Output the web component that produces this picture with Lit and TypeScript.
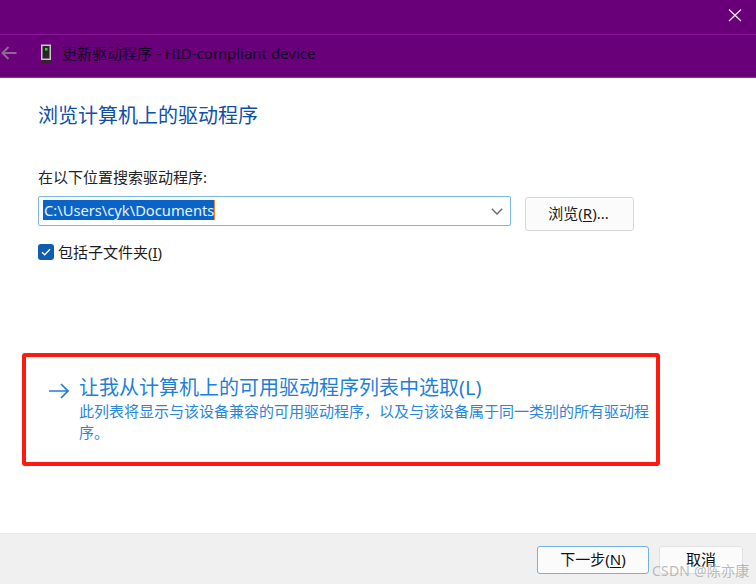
import { LitElement, html, css } from "lit";
import { customElement } from "lit/decorators.js";

@customElement("app-root")
export class AppRoot extends LitElement {
  static styles = css`
    :host {
      display: flex;
      flex-direction: column;
      position: relative;
      width: 756px;
      height: 584px;
      overflow: hidden;
      background: #fff;
      color: #1b1b1b;
      font-family: "Noto Sans", "Open Sans", "Noto Sans CJK SC", sans-serif;
      font-size: 15px;
    }
    .titlebar {
      height: 34px;
      flex: none;
      display: flex;
      justify-content: flex-end;
      align-items: flex-start;
      background: #690079;
      border-bottom: 1px solid #8a1a9a;
    }
    .close { margin: 8px 14px 0 0; display: block; }
    .nav {
      height: 42px;
      flex: none;
      box-sizing: content-box;
      display: flex;
      align-items: center;
      background: #690079;
      border-bottom: 1px solid #9a2aa8;
      color: #14052a;
      font-size: 15px;
    }
    .back { margin: 0 0 6px 1px; display: block; }
    .device { margin: 0 10px 5px 23px; display: block; }
    .nav-title { margin-bottom: 8px; }
    .content {
      flex: 1;
      display: flex;
      flex-direction: column;
      padding: 23px 0 0 38px;
      min-height: 0;
    }
    h1 {
      margin: 0;
      font-weight: 400;
      font-size: 20px;
      line-height: 30px;
      color: #0f4fa8;
    }
    .label { margin-top: 35px; line-height: 22px; color: #222; }
    .row { display: flex; margin-top: 8px; align-items: flex-start; }
    .combo {
      box-sizing: border-box;
      width: 473px;
      height: 30px;
      display: flex;
      align-items: center;
      justify-content: space-between;
      border: 1px solid #7ab8ea;
      border-radius: 2px;
      padding: 0 7px 0 4px;
    }
    .sel {
      background: #0a64c8;
      color: #e8f2ff;
      line-height: 20px;
      font-size: 14.7px;
      margin-bottom: 2px;
      padding-left: 1px;
      border-right: 1px solid #e88a30;
      white-space: nowrap;
    }
    .browse {
      box-sizing: border-box;
      width: 109px;
      height: 34px;
      margin: 1px 0 0 14px;
      padding: 0 2px 4px 0;
      display: flex;
      align-items: center;
      justify-content: center;
      background: #fbfbfb;
      border: 1px solid #d8d8d8;
      border-radius: 3px;
    }
    u { text-underline-offset: 2px; }
    .check { display: flex; align-items: center; gap: 4px; margin-top: 11px; line-height: 20px; }
    .box {
      width: 16px;
      height: 16px;
      border-radius: 3px;
      background: #0f5cb0;
      display: flex;
      align-items: center;
      justify-content: center;
      flex: none;
    }
    .link { display: flex; margin: 112px 0 0 11px; color: #1f7fd8; }
    .arrow { margin: 9px 11px 0 0; display: block; flex: none; }
    .link-title { font-size: 20px; line-height: 26px; margin-top: 1px; margin-left: -1px; }
    .link-sub { width: 572px; margin-left: -1px; line-height: 21px; color: #2a86dc; }
    .footer {
      height: 51px;
      flex: none;
      box-sizing: border-box;
      display: flex;
      justify-content: flex-end;
      gap: 10px;
      padding: 12px 13px 0 0;
      background: #f0f0f0;
      border-top: 1px solid #e6e6e6;
    }
    .btn {
      box-sizing: border-box;
      height: 28px;
      padding-bottom: 4px;
      display: flex;
      align-items: center;
      justify-content: center;
      background: #fbfbfb;
      border: 1px solid #e2e2e2;
      border-radius: 3px;
      color: #111;
    }
    .next { width: 112px; border: 1px solid #6fb2ea; }
    .cancel { width: 84px; }
    .highlight {
      position: absolute;
      left: 22px;
      top: 353px;
      width: 638px;
      height: 113px;
      box-sizing: border-box;
      border: 4px solid #ff1a10;
      border-radius: 3px;
    }
    .mark {
      position: absolute;
      left: 652px;
      top: 561px;
      font-size: 14px;
      line-height: 19px;
      letter-spacing: 0.2px;
      color: rgba(165, 165, 165, 0.75);
      white-space: nowrap;
    }
  `;

  render() {
    return html`
      <div class="titlebar">
        <svg class="close" width="14" height="14" viewBox="0 0 14 14">
          <path d="M1 1.5L13 13M13 1.5L1 13" stroke="#f4e8f6" stroke-width="1.2" fill="none" />
        </svg>
      </div>
      <div class="nav">
        <svg class="back" width="16" height="14" viewBox="0 0 16 14">
          <path d="M15.5 7H1.5M7.5 1L1.5 7L7.5 13" stroke="#8a6a92" stroke-width="2" fill="none" />
        </svg>
        <svg class="device" width="12" height="20" viewBox="0 0 12 20">
          <rect x="1" y="0.5" width="10" height="15.5" fill="#c8c8c8" />
          <rect x="2.5" y="2" width="7" height="12.5" fill="#262626" />
          <rect x="5" y="4" width="2.5" height="2.5" fill="#22dd44" />
          <rect x="1" y="16.5" width="10" height="3" fill="#2a2a2a" />
        </svg>
        <span class="nav-title">更新驱动程序 - HID-compliant device</span>
      </div>
      <div class="content">
        <h1>浏览计算机上的驱动程序</h1>
        <div class="label">在以下位置搜索驱动程序:</div>
        <div class="row">
          <div class="combo">
            <span class="sel">C:\\Users\\cyk\\Documents</span>
            <svg width="12" height="7" viewBox="0 0 12 7">
              <path d="M0.8 0.8L6 6L11.2 0.8" stroke="#666" stroke-width="1.3" fill="none" />
            </svg>
          </div>
          <div class="browse"><span>浏览(<u>R</u>)...</span></div>
        </div>
        <div class="check">
          <span class="box">
            <svg width="10" height="8" viewBox="0 0 10 8">
              <path d="M1 4.2L3.7 6.8L9 1.2" stroke="#fff" stroke-width="1.4" fill="none" />
            </svg>
          </span>
          <span>包括子文件夹(<u>I</u>)</span>
        </div>
        <div class="link">
          <svg class="arrow" width="20" height="16" viewBox="0 0 20 16">
            <path d="M0 8H19M12 1L19 8L12 15" stroke="#1f7fd8" stroke-width="1.7" fill="none" />
          </svg>
          <div>
            <div class="link-title">让我从计算机上的可用驱动程序列表中选取(L)</div>
            <div class="link-sub">此列表将显示与该设备兼容的可用驱动程序，以及与该设备属于同一类别的所有驱动程序。</div>
          </div>
        </div>
      </div>
      <div class="footer">
        <div class="btn next"><span>下一步(<u>N</u>)</span></div>
        <div class="btn cancel">取消</div>
      </div>
      <div class="highlight"></div>
      <div class="mark">CSDN @陈亦康</div>
    `;
  }
}
